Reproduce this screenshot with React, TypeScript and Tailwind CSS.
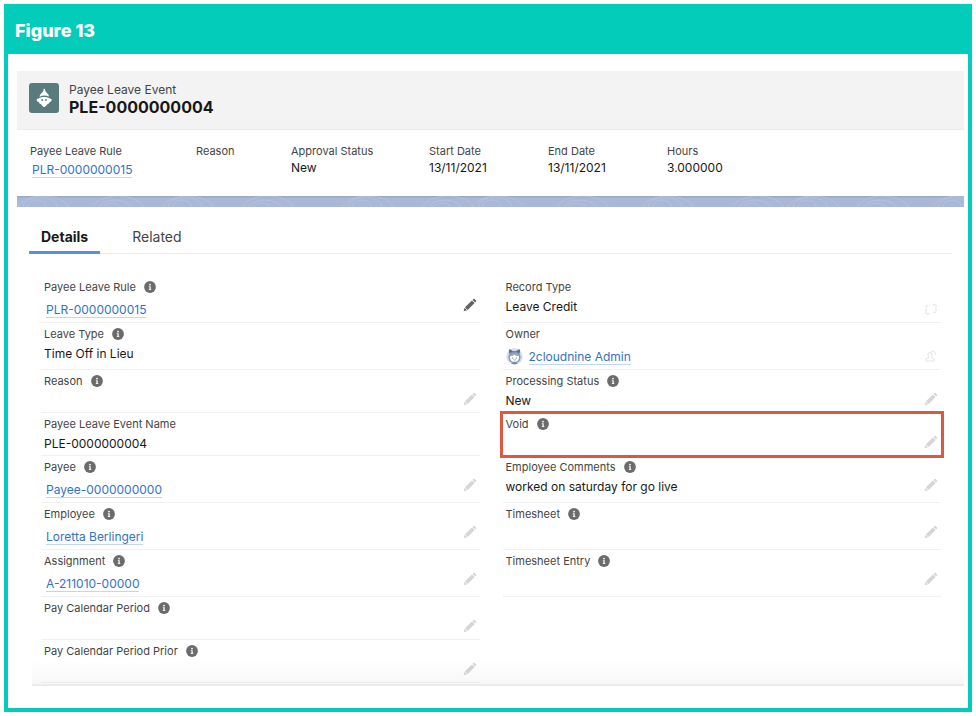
import type { ReactNode } from "react";

type Kind = "text" | "link" | "owner" | "none";
type Action = "edit" | "edit-dark" | "record-type" | "owner" | "none";

interface Field {
  label: string;
  info?: boolean;
  value?: string;
  kind?: Kind;
  action?: Action;
  tall?: boolean;
  highlighted?: boolean;
}

const leftFields: Field[] = [
  { label: "Payee Leave Rule", info: true, value: "PLR-0000000015", kind: "link", action: "edit-dark", tall: true },
  { label: "Leave Type", info: true, value: "Time Off in Lieu", kind: "text", tall: true },
  { label: "Reason", info: true, action: "edit" },
  { label: "Payee Leave Event Name", value: "PLE-0000000004", kind: "text" },
  { label: "Payee", info: true, value: "Payee-0000000000", kind: "link", action: "edit", tall: true },
  { label: "Employee", info: true, value: "Loretta Berlingeri", kind: "link", action: "edit", tall: true },
  { label: "Assignment", info: true, value: "A-211010-00000", kind: "link", action: "edit", tall: true },
  { label: "Pay Calendar Period", info: true, action: "edit" },
  { label: "Pay Calendar Period Prior", info: true, action: "edit" },
];

const rightFields: Field[] = [
  { label: "Record Type", value: "Leave Credit", kind: "text", action: "record-type", tall: true },
  { label: "Owner", value: "2cloudnine Admin", kind: "owner", action: "owner", tall: true },
  { label: "Processing Status", info: true, value: "New", kind: "text", action: "edit" },
  { label: "Void", info: true, action: "edit", highlighted: true },
  { label: "Employee Comments", info: true, value: "worked on saturday for go live", kind: "text", action: "edit", tall: true },
  { label: "Timesheet", info: true, action: "edit", tall: true },
  { label: "Timesheet Entry", info: true, action: "edit", tall: true },
];

const summary = [
  { label: "Payee Leave Rule", value: "PLR-0000000015", link: true },
  { label: "Reason", value: "" },
  { label: "Approval Status", value: "New" },
  { label: "Start Date", value: "13/11/2021" },
  { label: "End Date", value: "13/11/2021" },
  { label: "Hours", value: "3.000000" },
];

function RecordLink({ children }: { children: ReactNode }) {
  return (
    <a href="#record" className="ml-[2px] block w-fit border-b border-[#c3d6f0] text-[12px] leading-[15px] text-[#3272c8]">
      {children}
    </a>
  );
}

function InfoIcon() {
  return (
    <svg viewBox="0 0 12 12" className="size-3" aria-hidden="true">
      <circle cx="6" cy="6" r="5.9" fill="#6b6b6b" />
      <circle cx="6" cy="3.6" r="0.9" fill="#fff" />
      <path d="M4.8 5.200h1.900v3h.6v.8H4.800v-.8h.6V6h-.6z" fill="#fff" />
    </svg>
  );
}

function PencilIcon() {
  return (
    <svg viewBox="0 0 14 14" className="size-[14px]" fill="currentColor" aria-hidden="true">
      <path d="M.6 13.200l.9-3.500 2.600 2.600z" />
      <path d="M2 9.200L8.900 2.500l2.700 2.600-7 6.800z" />
      <path d="M9.500 2l1-.9c.4-.4.8-.4 1.200 0l1.300 1.300c.4.4.4.8 0 1.200l-.9.9z" />
    </svg>
  );
}

function RecordTypeIcon() {
  return (
    <svg viewBox="0 0 14 14" className="size-[14px]" fill="none" stroke="currentColor" strokeWidth="1.4" aria-hidden="true">
      <path d="M2 9V5.500a2 2 0 0 1 2-2h1.500M8.500 2.500h3.500v3.500M12 6v2.500a2 2 0 0 1-2 2H9M5.500 12H2V8.500" strokeDasharray="2.600 1" />
    </svg>
  );
}

function OwnerIcon() {
  return (
    <svg viewBox="0 0 14 14" className="size-[14px]" fill="none" stroke="currentColor" strokeWidth="1.2" aria-hidden="true">
      <path d="M4.500 7a2 2 0 1 1 3 0v1.500l2.500 1.500v2H2v-2l2.500-1.500zM7 2.500c2-1.200 4.500 0 4.500 3" />
    </svg>
  );
}

function Avatar() {
  return (
    <svg viewBox="0 0 17 17" className="size-[17px]" aria-hidden="true">
      <circle cx="8.500" cy="8.500" r="8.200" fill="#d3dcea" />
      <path d="M3.200 1.200c1.400 0 2.300.8 3 1.800h4.600c.7-1 1.600-1.800 3-1.800.4 2 .2 3.400-.6 4.800H3.800c-.8-1.400-1-2.800-.6-4.800z" fill="#5b6d90" />
      <circle cx="8.500" cy="9.200" r="6" fill="#8494b1" />
      <ellipse cx="8.500" cy="9.800" rx="4.700" ry="4" fill="#fff" />
      <path d="M4.200 8c2.400.5 3.200-1 4.300-1s1.900 1.500 4.300 1c-.6-2-2.300-2.800-4.300-2.800S4.800 6 4.200 8z" fill="#9aa8c2" />
      <circle cx="6.700" cy="10" r=".6" fill="#43557a" />
      <circle cx="10.300" cy="10" r=".6" fill="#43557a" />
      <path d="M7.300 11.600q1.200.9 2.400 0" fill="none" stroke="#43557a" strokeWidth=".5" />
      <path d="M5 15.200q3.500-1.500 7 0-3.500 2.300-7 0z" fill="#71839f" />
    </svg>
  );
}

function EventIcon() {
  return (
    <svg viewBox="0 0 30 30" className="size-[30px] rounded-[3px]" aria-hidden="true">
      <rect width="30" height="30" fill="#5a7b7d" />
      <path d="M15.300 5.800c.7 0 .8.700.9 1.500.2 1.300 1 2 2 3 1.100 1.100 1.600 1.900 1.800 3.300-3-1.500-6.300-1.500-9.400.1.100-1.500.700-2.400 1.800-3.400 1-.9 1.800-1.700 2-3 .1-.8.200-1.500.9-1.500z" fill="#fff" />
      <path d="M7.700 16.600c0-.8.800-1.100 1.500-.8 2.400-2.500 9.600-2.500 12 0 .8-.3 1.500 0 1.500.8 0 1.400-.8 2.300-2 2.500-.4 1.200-1.300 1.900-2.500 2.200-.7 1.500-1.700 2.600-3 2.600s-2.300-1.100-3-2.600c-1.200-.3-2.100-1-2.500-2.200-1.200-.2-2-1.100-2-2.500z" fill="#fff" />
      <circle cx="13.200" cy="17" r=".9" fill="#5a7b7d" />
      <circle cx="17" cy="17" r=".9" fill="#5a7b7d" />
    </svg>
  );
}

function ContourBand() {
  const swirls = [20, 95, 165, 245, 345, 425, 475, 560, 645, 735, 790, 860, 935];
  return (
    <svg className="block h-[11px] w-full bg-[#a8b9d8]" viewBox="0 0 947 11" preserveAspectRatio="xMidYMid slice" aria-hidden="true">
      <rect width="947" height="1.500" fill="#9aabc9" />
      <g fill="none" stroke="#b9c8e1" strokeWidth="1" opacity=".7">
        {swirls.map((x, i) => (
          <g key={x}>
            <ellipse cx={x} cy={i % 2 ? 13 : 10} rx={9} ry={6} />
            <ellipse cx={x + 3} cy={i % 2 ? 14 : 11} rx={17} ry={10} />
            <ellipse cx={x + 6} cy={14} rx={26} ry={14} />
          </g>
        ))}
      </g>
    </svg>
  );
}

function FieldAction({ action, label }: { action: Action; label: string }) {
  if (action === "none") return null;
  const lookup = action === "record-type" || action === "owner";
  return (
    <button
      type="button"
      aria-label={`Edit ${label}`}
      className={`mr-[3px] self-start ${lookup ? "mt-[26px] text-[#e8e8e8]" : action === "edit-dark" ? "mt-[22px] text-[#636363]" : "mt-[22px] text-[#d6d6d6]"}`}
    >
      {action === "record-type" ? <RecordTypeIcon /> : action === "owner" ? <OwnerIcon /> : <PencilIcon />}
    </button>
  );
}

function FieldRow({ field }: { field: Field }) {
  const { label, info, value, kind = "none", action = "none", tall, highlighted } = field;
  return (
    <div className={`relative flex justify-between border-b border-[#f1f1f1] ${tall ? "h-[47px]" : "h-[43px]"}`}>
      <div className="pt-[3px] pl-[3px]">
        <div className="flex h-4 items-center gap-2 text-[11px] leading-4 text-[#444]">
          <span>{label}</span>
          {info && <InfoIcon />}
        </div>
        {kind === "text" && <div className="mt-[3px] text-[12px] leading-[18px] text-[#181818]">{value}</div>}
        {kind === "link" && (
          <div className="mt-[7px]">
            <RecordLink>{value}</RecordLink>
          </div>
        )}
        {kind === "owner" && (
          <div className="mt-[6px] flex items-center gap-1">
            <Avatar />
            <RecordLink>{value}</RecordLink>
          </div>
        )}
      </div>
      <FieldAction action={action} label={label} />
      {highlighted && (
        <div className="pointer-events-none absolute -top-[2px] -right-[3px] -bottom-[3px] -left-[3px] border-[3px] border-[#dc5840]" />
      )}
    </div>
  );
}

export default function App() {
  return (
    <div className="bg-white p-1 font-['Inter','Liberation_Sans',sans-serif]">
      <figure className="border-4 border-[#03cdba] bg-white">
        <figcaption className="flex h-[46px] items-center bg-[#03cdba] px-[7px] pb-[1px] text-[18px] leading-6 font-extrabold text-white">
          Figure 13
        </figcaption>

        <div className="pt-[17px] pr-1 pb-[22px] pl-[9px]">
          <header>
            <div className="flex h-[59px] items-start gap-[10px] border-b border-[#ececec] bg-[#f3f3f3] px-3 pt-3">
              <EventIcon />
              <div className="-mt-px">
                <p className="text-[12px] leading-4 text-[#444]">Payee Leave Event</p>
                <h1 className="text-[16px] leading-[18px] font-bold text-[#181818]">PLE-0000000004</h1>
              </div>
            </div>
            <dl className="grid h-[66px] grid-cols-[166fr_95fr_138fr_119fr_119fr_284fr] px-[13px] pt-[13px]">
              {summary.map((item) => (
                <div key={item.label}>
                  <dt className="text-[11px] leading-4 text-[#444]">{item.label}</dt>
                  {item.link ? (
                    <dd className="mt-[3px]">
                      <RecordLink>{item.value}</RecordLink>
                    </dd>
                  ) : (
                    <dd className="text-[12px] leading-[18px] text-[#181818]">{item.value}</dd>
                  )}
                </div>
              ))}
            </dl>
          </header>

          <ContourBand />

          <section className="relative pt-[15px]">
            <nav className="mr-3 ml-3 flex h-[32px] gap-5 border-b border-[#ededed]" role="tablist">
              <button type="button" role="tab" aria-selected="true" className="h-[32px] border-b-[3px] border-[#5a8fe0] px-3 text-[14px] leading-[29px] font-bold text-[#181818]">
                Details
              </button>
              <button type="button" role="tab" aria-selected="false" className="h-[32px] border-b-[3px] border-transparent px-3 text-[14px] leading-[29px] text-[#444]">
                Related
              </button>
            </nav>

            <div className="grid grid-cols-2 gap-x-[23px] pt-[22px] pr-[23px] pb-[3px] pl-6">
              <div>
                {leftFields.map((field) => (
                  <FieldRow key={field.label} field={field} />
                ))}
              </div>
              <div>
                {rightFields.map((field) => (
                  <FieldRow key={field.label} field={field} />
                ))}
              </div>
            </div>

            <div className="pointer-events-none absolute right-0 bottom-0 left-[15px] h-[26px] border-b-2 border-black/8 bg-linear-to-b from-transparent to-black/3" />
          </section>
        </div>
      </figure>
    </div>
  );
}
